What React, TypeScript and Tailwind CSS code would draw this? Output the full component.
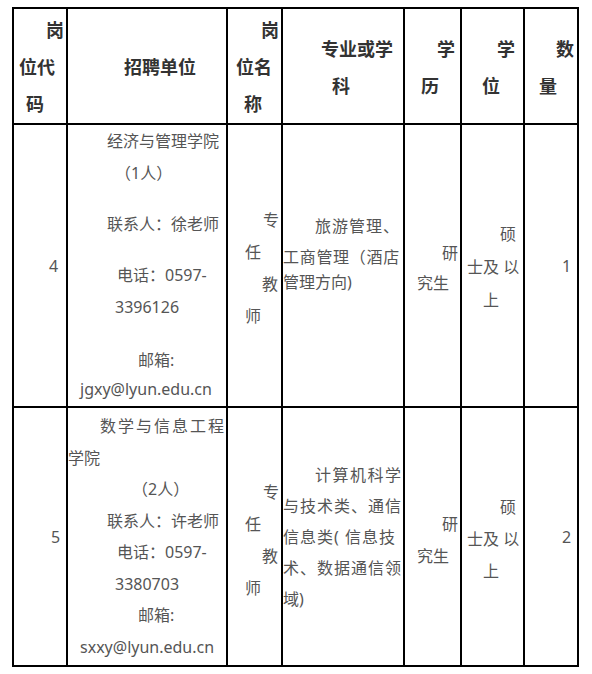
import React from 'react'

type Line = { t: string; c: string }

// 一列里按行排的文字，每行单独给缩进
function Lines({ lines, className = '' }: { lines: Line[]; className?: string }) {
    return (
        <div className={className}>
            {lines.map((l, i) => (
                <div key={i} className={`whitespace-nowrap ${l.c}`}>
                    {l.t}
                </div>
            ))}
        </div>
    )
}

const head = 'border-2 border-black p-0 align-middle font-bold text-[18px] leading-[37px] text-[#333]'
const cell = 'border-2 border-black p-0 align-middle text-[16px] text-[#555]'

export default function App() {
    return (
        <div
            className="min-h-screen bg-white pt-[7px] pl-[12px]"
            style={{ fontFamily: '"Noto Sans", "Noto Sans CJK SC", sans-serif' }}
        >
            <table className="table-fixed border-collapse w-[567px]">
                <colgroup>
                    <col className="w-[54px]" />
                    <col className="w-[160px]" />
                    <col className="w-[55px]" />
                    <col className="w-[122px]" />
                    <col className="w-[57px]" />
                    <col className="w-[63px]" />
                    <col className="w-[54px]" />
                </colgroup>
                <tbody>
                    {/* 表头 */}
                    <tr className="h-[116px]">
                        <td className={head}>
                            <Lines className="pt-[3px]" lines={[
                                { t: '岗', c: 'pl-[32px]' },
                                { t: '位代', c: 'pl-[5px]' },
                                { t: '码', c: 'pl-[12px]' },
                            ]} />
                        </td>
                        <td className={head}>
                            <Lines className="pt-[3px]" lines={[{ t: '招聘单位', c: 'pl-[56px]' }]} />
                        </td>
                        <td className={head}>
                            <Lines className="pt-[3px]" lines={[
                                { t: '岗', c: 'pl-[33px]' },
                                { t: '位名', c: 'pl-[8px]' },
                                { t: '称', c: 'pl-[16px]' },
                            ]} />
                        </td>
                        <td className={head}>
                            <Lines className="pt-[3px]" lines={[
                                { t: '专业或学', c: 'pl-[38px]' },
                                { t: '科', c: 'pl-[49px]' },
                            ]} />
                        </td>
                        <td className={head}>
                            <Lines className="pt-[3px]" lines={[
                                { t: '学', c: 'pl-[32px]' },
                                { t: '历', c: 'pl-[16px]' },
                            ]} />
                        </td>
                        <td className={head}>
                            <Lines className="pt-[3px]" lines={[
                                { t: '学', c: 'pl-[35px]' },
                                { t: '位', c: 'pl-[20px]' },
                            ]} />
                        </td>
                        <td className={head}>
                            <Lines className="pt-[3px]" lines={[
                                { t: '数', c: 'pl-[31px]' },
                                { t: '量', c: 'pl-[14px]' },
                            ]} />
                        </td>
                    </tr>

                    {/* 岗位 4 */}
                    <tr className="h-[283px]">
                        <td className={cell}>
                            <div className="pl-[35px] leading-[32px]">4</div>
                        </td>
                        <td className={`${cell} !align-top`}>
                            <Lines className="leading-[32px]" lines={[
                                { t: '经济与管理学院', c: 'pl-[39px]' },
                                { t: '（1人）', c: 'pl-[47px]' },
                                { t: '联系人：徐老师', c: 'pl-[39px] mt-[19px]' },
                                { t: '电话：0597-', c: 'pl-[49px] mt-[19px]' },
                                { t: '3396126', c: 'pl-[47px]' },
                                { t: '邮箱:', c: 'pl-[70px] mt-[21px]' },
                                { t: 'jgxy@lyun.edu.cn', c: 'pl-[12px] mt-[-3px]' },
                            ]} />
                        </td>
                        <td className={cell}>
                            <Lines className="leading-[32px] pt-[4px]" lines={[
                                { t: '专', c: 'pl-[35px]' },
                                { t: '任', c: 'pl-[17px]' },
                                { t: '教', c: 'pl-[34px]' },
                                { t: '师', c: 'pl-[17px]' },
                            ]} />
                        </td>
                        <td className={`${cell} !align-top`}>
                            <Lines className="pt-[86px] leading-[31px]" lines={[
                                { t: '旅游管理、', c: 'pl-[32px] tracking-[1px]' },
                                { t: '工商管理（酒店', c: 'pl-0 tracking-[0.7px]' },
                                { t: '管理方向)', c: 'pl-0 mt-[-6px]' },
                            ]} />
                        </td>
                        <td className={cell}>
                            <Lines className="leading-[30px] pt-[4px]" lines={[
                                { t: '研', c: 'pl-[37px]' },
                                { t: '究生', c: 'pl-[12px]' },
                            ]} />
                        </td>
                        <td className={cell}>
                            <Lines className="leading-[33px] pt-[4px]" lines={[
                                { t: '硕', c: 'pl-[38px]' },
                                { t: '士及 以', c: 'pl-[5px]' },
                                { t: '上', c: 'pl-[21px]' },
                            ]} />
                        </td>
                        <td className={cell}>
                            <div className="pl-[37px] leading-[32px]">1</div>
                        </td>
                    </tr>

                    {/* 岗位 5 */}
                    <tr className="h-[259px]">
                        <td className={cell}>
                            <div className="pl-[37px] leading-[32px]">5</div>
                        </td>
                        <td className={cell}>
                            <Lines className="leading-[31.5px] pt-[1px]" lines={[
                                { t: '数学与信息工程', c: 'pl-[32px] tracking-[2px]' },
                                { t: '学院', c: 'pl-0' },
                                { t: '（2人）', c: 'pl-[64px]' },
                                { t: '联系人：许老师', c: 'pl-[39px]' },
                                { t: '电话：0597-', c: 'pl-[49px]' },
                                { t: '3380703', c: 'pl-[47px]' },
                                { t: '邮箱:', c: 'pl-[70px]' },
                                { t: 'sxxy@lyun.edu.cn', c: 'pl-[12px]' },
                            ]} />
                        </td>
                        <td className={cell}>
                            <Lines className="leading-[32px] pt-[6px]" lines={[
                                { t: '专', c: 'pl-[35px]' },
                                { t: '任', c: 'pl-[17px]' },
                                { t: '教', c: 'pl-[34px]' },
                                { t: '师', c: 'pl-[17px]' },
                            ]} />
                        </td>
                        <td className={cell}>
                            <Lines className="leading-[31px] pt-[1px]" lines={[
                                { t: '计算机科学', c: 'pl-[32px] tracking-[1.5px]' },
                                { t: '与技术类、通信', c: 'pl-0 tracking-[1px]' },
                                { t: '信息类( 信息技', c: 'pl-0 tracking-[1px]' },
                                { t: '术、数据通信领', c: 'pl-0 tracking-[1px]' },
                                { t: '域)', c: 'pl-0' },
                            ]} />
                        </td>
                        <td className={cell}>
                            <Lines className="leading-[32px] pt-[6px]" lines={[
                                { t: '研', c: 'pl-[37px]' },
                                { t: '究生', c: 'pl-[12px]' },
                            ]} />
                        </td>
                        <td className={cell}>
                            <Lines className="leading-[32px] pt-[4px]" lines={[
                                { t: '硕', c: 'pl-[38px]' },
                                { t: '士及 以', c: 'pl-[5px]' },
                                { t: '上', c: 'pl-[21px]' },
                            ]} />
                        </td>
                        <td className={cell}>
                            <div className="pl-[37px] leading-[32px]">2</div>
                        </td>
                    </tr>
                </tbody>
            </table>
        </div>
    )
}
